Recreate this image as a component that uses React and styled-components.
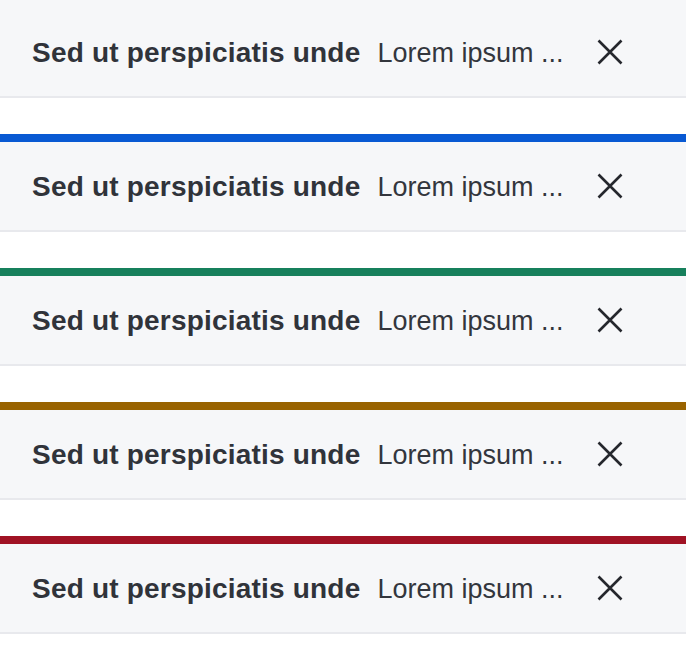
import styled, { createGlobalStyle } from 'styled-components';

const GlobalStyle = createGlobalStyle`
  html, body {
    margin: 0;
    padding: 0;
    background: #ffffff;
  }
  body {
    font-family: "Liberation Sans", Arial, sans-serif;
  }
`;

const Stack = styled.div`
  display: flex;
  flex-direction: column;
  gap: 36px;
  width: 686px;
`;

const Banner = styled.div`
  display: flex;
  align-items: center;
  height: 86px;
  padding: 2px 52px 0 32px;
  box-sizing: content-box;
  background: #f6f7f9;
  border-top: 8px solid ${(p) => p.$accent || '#f6f7f9'};
  border-bottom: 2px solid #e8e9ed;
`;

const Title = styled.span`
  font-size: 28px;
  font-weight: 700;
  letter-spacing: 0.2px;
  color: #30333a;
  white-space: nowrap;
  margin-right: 17px;
`;

const Message = styled.span`
  font-size: 27px;
  font-weight: 400;
  color: #33363d;
  white-space: nowrap;
  overflow: hidden;
`;

const CloseButton = styled.button`
  display: flex;
  align-items: center;
  justify-content: center;
  width: 48px;
  height: 48px;
  margin-left: auto;
  margin-top: -2px;
  padding: 0;
  border: none;
  background: transparent;
  cursor: pointer;
  color: #25272d;
`;

const CloseIcon = () => (
  <svg width="26" height="26" viewBox="0 0 26 26" fill="none">
    <path
      d="M1.5 1.5L24.5 24.5M24.5 1.5L1.5 24.5"
      stroke="currentColor"
      strokeWidth="2.6"
    />
  </svg>
);

const banners = [
  { id: 1, accent: null },
  { id: 2, accent: '#0859d3' },
  { id: 3, accent: '#17805c' },
  { id: 4, accent: '#996300' },
  { id: 5, accent: '#a01224' },
];

export default function App() {
  return (
    <>
      <GlobalStyle />
      <Stack>
        {banners.map((b) => (
          <Banner key={b.id} $accent={b.accent}>
            <Title>Sed ut perspiciatis unde</Title>
            <Message>Lorem ipsum ...</Message>
            <CloseButton aria-label="Close">
              <CloseIcon />
            </CloseButton>
          </Banner>
        ))}
      </Stack>
    </>
  );
}
